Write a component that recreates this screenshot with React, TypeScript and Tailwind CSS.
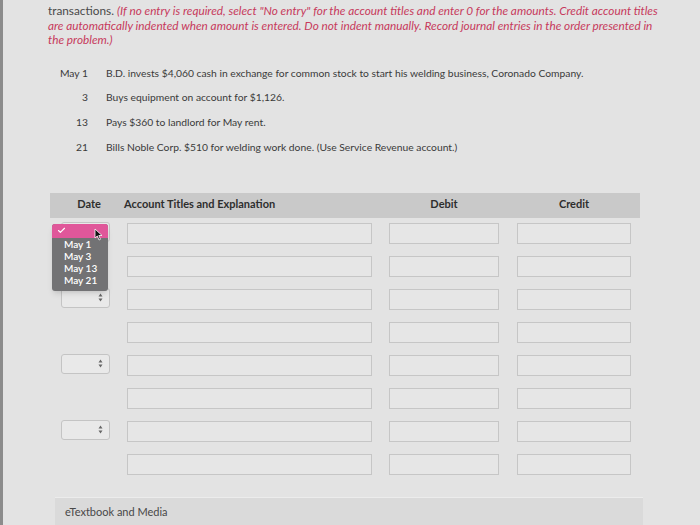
import { Check } from 'lucide-react';

const txns = [
  { d: 'May 1', t: 'B.D. invests $4,060 cash in exchange for common stock to start his welding business, Coronado Company.' },
  { d: '3', t: 'Buys equipment on account for $1,126.' },
  { d: '13', t: 'Pays $360 to landlord for May rent.' },
  { d: '21', t: 'Bills Noble Corp. $510 for welding work done. (Use Service Revenue account.)' },
];

function Select() {
  return (
    <div className="w-[49px] h-[20px] rounded-[3px] border border-[#c4c4c4] bg-[#e9e9e9] flex items-center justify-end pr-[6px]">
      <svg width="5" height="9" viewBox="0 0 5 9">
        <path d="M2.5 0.5 L4.5 3.5 H0.5 Z M2.5 8.5 L4.5 5.5 H0.5 Z" fill="#666" />
      </svg>
    </div>
  );
}

function Box({ w }: { w: string }) {
  return <div className={`${w} h-[21px] border border-[#c6c6c6] bg-[#e6e6e6]`} />;
}

function Dropdown() {
  return (
    <div className="absolute left-[2px] top-[2px] w-[56px] rounded-[3px] bg-[#727274] shadow-md pb-[5px] z-10">
      <div className="h-[14px] bg-[#e0579a] rounded-t-[3px] flex items-center pl-[5px] relative">
        <Check className="w-[9px] h-[9px] text-white" strokeWidth={3} />
        <svg className="absolute left-[42px] top-[4px]" width="9" height="13" viewBox="0 0 9 13">
          <path d="M1 1 L1 10 L3.3 8 L5 12 L6.5 11.3 L4.8 7.5 L8 7.5 Z" fill="#111" stroke="#fff" strokeWidth="0.8" />
        </svg>
      </div>
      <div className="pl-[12px] pt-[0px] text-white text-[10px] leading-[12px] font-semibold">
        <div>May 1</div>
        <div>May 3</div>
        <div>May 13</div>
        <div>May 21</div>
      </div>
    </div>
  );
}

export default function App() {
  const rows = [0, 1, 2, 3, 4, 5, 6, 7];
  return (
    <div
      className="w-[700px] h-[525px] overflow-hidden bg-[#e3e3e3] border-l-[3px] border-[#8c8c8c] text-[#333]"
      style={{ fontFamily: 'Lato, "Noto Sans", sans-serif' }}
    >
      <div className="ml-[45px] w-[612px] pt-[4px] text-[11.8px] leading-[14.5px] italic">
        <span className="not-italic text-[#4a4a4a]">transactions. </span>
        <span className="text-[#c73a5c]">
          (If no entry is required, select "No entry" for the account titles and enter 0 for the amounts. Credit account titles are automatically indented when amount is entered. Do not indent manually. Record journal entries in the order presented in the problem.)
        </span>
      </div>

      <div className="pl-[52px] mt-[18px] flex flex-col gap-[10.7px] text-[10.3px] leading-[14px] text-[#3a3a3a]">
        {txns.map((x) => (
          <div key={x.d} className="flex">
            <div className="w-[33px] text-right">{x.d}</div>
            <div className="pl-[18px]">{x.t}</div>
          </div>
        ))}
      </div>

      <div className="ml-[47px] mt-[39px] w-[590px]">
        <div className="h-[25px] bg-[#c9c9c9] grid grid-cols-[77px_262px_128px_123px] items-center pb-[2px] text-[11px] font-bold text-[#2e2e2e]">
          <div className="text-center pl-[1px]">Date</div>
          <div className="-ml-[3px]">Account Titles and Explanation</div>
          <div className="text-center w-[110px]">Debit</div>
          <div className="text-center w-[114px]">Credit</div>
        </div>
        <div className="flex flex-col gap-[12px] mt-[5px]">
          {rows.map((i) => (
            <div key={i} className="grid grid-cols-[77px_262px_128px_123px] items-start">
              <div className="relative pl-[11px] -mt-[1px]">
                {i % 2 === 0 && <Select />}
                {i === 0 && <Dropdown />}
              </div>
              <Box w="w-[245px]" />
              <Box w="w-[110px]" />
              <Box w="w-[114px]" />
            </div>
          ))}
        </div>
      </div>

      <div className="ml-[52px] mt-[22px] w-[588px] h-[30px] bg-[#dadada] border-t border-[#ececec] pl-[10px] pt-[6px] text-[11px] text-[#484848]">
        eTextbook and Media
      </div>
    </div>
  );
}
